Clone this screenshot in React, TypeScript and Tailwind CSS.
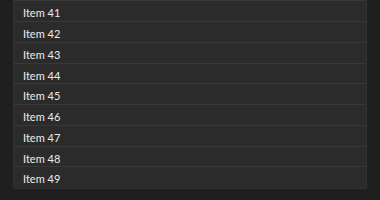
const items = [41, 42, 43, 44, 45, 46, 47, 48, 49];

export default function App() {
  return (
    <div className="h-[200px] w-[380px] overflow-hidden bg-[#1f1f1f] px-[13px] pb-[11px] flex flex-col justify-end font-['Lato',sans-serif]">
      <div className="flex flex-col justify-end overflow-hidden rounded-b-[3px] bg-[#2b2b2b] border border-t-0 border-[#323232]">
        {/* tail of the previous row, scrolled out of view */}
        <div className="shrink-0 h-[3px] border-b border-[#383838]" />
        {items.map((n, i) => (
          <div
            key={n}
            className={`shrink-0 h-[20.75px] flex items-start pt-[6px] pl-[9px] text-[11px] leading-[11px] text-[#ececec] ${i < items.length - 1 ? "border-b border-[#383838]" : ""}`}
          >
            Item {n}
          </div>
        ))}
      </div>
    </div>
  );
}
